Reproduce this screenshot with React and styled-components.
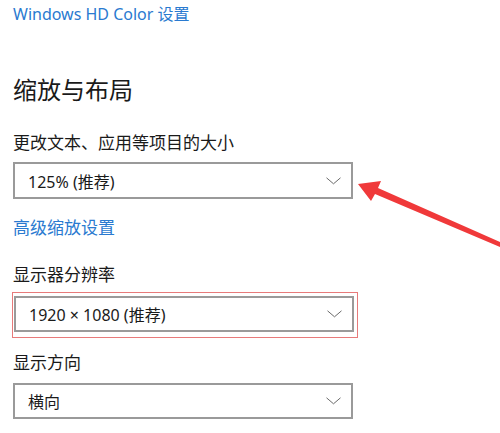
import React from 'react';
import styled, { createGlobalStyle } from 'styled-components';

const GlobalStyle = createGlobalStyle`
  html, body {
    margin: 0;
    padding: 0;
    background: #fff;
  }
  body {
    font-family: 'Noto Sans', 'Noto Sans CJK SC', sans-serif;
    color: #111;
  }
`;

const Page = styled.div`
  position: relative;
  width: 500px;
  height: 433px;
  overflow: hidden;
  padding: 4px 0 0 13px;
  box-sizing: border-box;
`;

const Link = styled.div`
  font-size: ${(p) => p.$size || 17}px;
  line-height: 20px;
  color: #2a7ad0;
  margin-top: ${(p) => p.$top || 0}px;
`;

const Heading = styled.h2`
  margin: 51px 0 0;
  font-size: 24px;
  font-weight: 400;
  line-height: 30px;
  color: #1a1a1a;
`;

const Label = styled.div`
  font-size: 17px;
  line-height: 20px;
  color: #1a1a1a;
  margin-top: ${(p) => p.$top}px;
`;

const Select = styled.div`
  display: flex;
  align-items: center;
  justify-content: space-between;
  box-sizing: border-box;
  width: 340px;
  height: ${(p) => p.$h || 37}px;
  margin-top: ${(p) => p.$top || 0}px;
  padding: 0 10px 0 13px;
  border: 2px solid #9a9a9a;
  background: #fff;
  font-size: 16px;
  color: #1a1a1a;
`;

const Highlight = styled.div`
  position: relative;
  margin-top: 11px;
  margin-left: 1px;
  width: 339px;

  &::after {
    content: '';
    position: absolute;
    left: -2px;
    top: -4px;
    right: -5px;
    bottom: -6px;
    border: 1px solid #e77a7a;
    pointer-events: none;
  }
`;

const Arrow = styled.svg`
  position: absolute;
  left: 0;
  top: 0;
`;

const Chevron = () => (
  <svg width="15" height="8" viewBox="0 0 15 8">
    <path d="M0.5 0.8 L7.5 6.8 L14.5 0.8" fill="none" stroke="#6a6a6a" strokeWidth="1" />
  </svg>
);

const Dropdown = ({ value, top, h }) => (
  <Select $top={top} $h={h}>
    <span>{value}</span>
    <Chevron />
  </Select>
);

export default function App() {
  return (
    <>
      <GlobalStyle />
      <Page>
        <Link $size={16}>Windows HD Color 设置</Link>
        <Heading>缩放与布局</Heading>
        <Label $top={28}>更改文本、应用等项目的大小</Label>
        <Dropdown value="125% (推荐)" top={9} />
        <Link $top={19}>高级缩放设置</Link>
        <Label $top={27}>显示器分辨率</Label>
        <Highlight>
          <Dropdown value="1920 × 1080 (推荐)" h={36} />
        </Highlight>
        <Label $top={21}>显示方向</Label>
        <Dropdown value="横向" top={10} h={36} />
        <Arrow width="500" height="433" viewBox="0 0 500 433">
          <polygon
            points="358,184 381,181 378,188 500,242 500,247 375,194 371,201"
            fill="#f0393a"
          />
        </Arrow>
      </Page>
    </>
  );
}
